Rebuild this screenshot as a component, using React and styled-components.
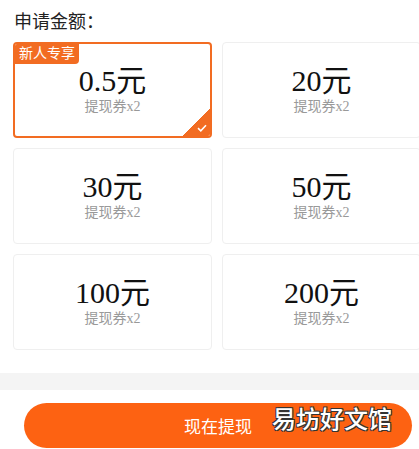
import styled, { createGlobalStyle } from 'styled-components';

const ORANGE = '#f26c22';

const GlobalStyle = createGlobalStyle`
  html, body {
    margin: 0;
    padding: 0;
    background: #fff;
  }
  body {
    font-family: 'Liberation Serif', 'Noto Sans CJK SC', serif;
  }
`;

const amounts = [
	{value: '0.5元', isNew: true},
	{value: '20元'},
	{value: '30元'},
	{value: '50元'},
	{value: '100元'},
	{value: '200元'},
];

export default function App(){
	return(
		<Page>
			<GlobalStyle/>
			<Title>申请金额：</Title>
			<Grid>
				{amounts.map((a, i) => (
					<Card key={a.value} selected={i === 0}>
						{a.isNew && <Tag>新人专享</Tag>}
						<Amount>{a.value}</Amount>
						<Ticket>提现券x2</Ticket>
						{i === 0 && (
							<Corner>
								<svg width="10" height="8" viewBox="0 0 10 8">
									<path d="M1 4.2 L3.8 6.8 L9 1.2" fill="none" stroke="#fff" strokeWidth="1.6"/>
								</svg>
							</Corner>
						)}
					</Card>
				))}
			</Grid>
			<Band/>
			<ButtonRow>
				<SubmitButton>现在提现</SubmitButton>
				<Watermark>易坊好文馆</Watermark>
			</ButtonRow>
		</Page>
	);
}

const Page = styled.div`
  width: 419px;
  height: 449px;
  overflow: hidden;
  position: relative;
  background: #fff;
`;

const Title = styled.div`
  padding: 10px 14px 0;
  font-size: 18px;
  line-height: 24px;
  color: #222;
`;

const Grid = styled.div`
  margin-top: 8px;
  padding-left: 13px;
  display: grid;
  grid-template-columns: 199px 199px;
  grid-auto-rows: 96px;
  gap: 10px;
`;

const Card = styled.div`
  position: relative;
  box-sizing: border-box;
  border: ${p => p.selected ? `2px solid ${ORANGE}` : '1px solid #efefef'};
  border-radius: 4px;
  overflow: hidden;
  display: flex;
  flex-direction: column;
  align-items: center;
  justify-content: center;
`;

const Tag = styled.div`
  position: absolute;
  top: 0;
  left: 0;
  height: 20px;
  padding: 0 4px;
  background: ${ORANGE};
  color: #fff;
  font-size: 14px;
  line-height: 20px;
  border-bottom-right-radius: 4px;
`;

const Amount = styled.div`
  font-size: 30px;
  line-height: 34px;
  color: #111;
`;

const Ticket = styled.div`
  font-size: 14px;
  line-height: 18px;
  color: #999;
`;

const Corner = styled.div`
  position: absolute;
  right: 0;
  bottom: 0;
  width: 27px;
  height: 27px;
  background: linear-gradient(135deg, transparent 50%, ${ORANGE} 50%);
  display: flex;
  align-items: flex-end;
  justify-content: flex-end;
  padding: 0 3px 4px 0;
  box-sizing: border-box;
`;

const Band = styled.div`
  margin-top: 23px;
  height: 17px;
  background: #f4f4f4;
`;

const ButtonRow = styled.div`
  position: relative;
  padding: 13px 7px 0 24px;
`;

const SubmitButton = styled.div`
  height: 45px;
  border-radius: 23px;
  background: #fd6212;
  color: #fff;
  font-size: 17px;
  display: flex;
  align-items: center;
  justify-content: center;
`;

const Watermark = styled.div`
  position: absolute;
  left: 272px;
  top: 13px;
  font-family: 'Noto Sans CJK SC', sans-serif;
  font-weight: 500;
  font-size: 24px;
  line-height: 30px;
  color: #fff;
  text-shadow: 1px 1px 0 #333, -1px -1px 0 #333, 1px -1px 0 #333, -1px 1px 0 #333;
`;
